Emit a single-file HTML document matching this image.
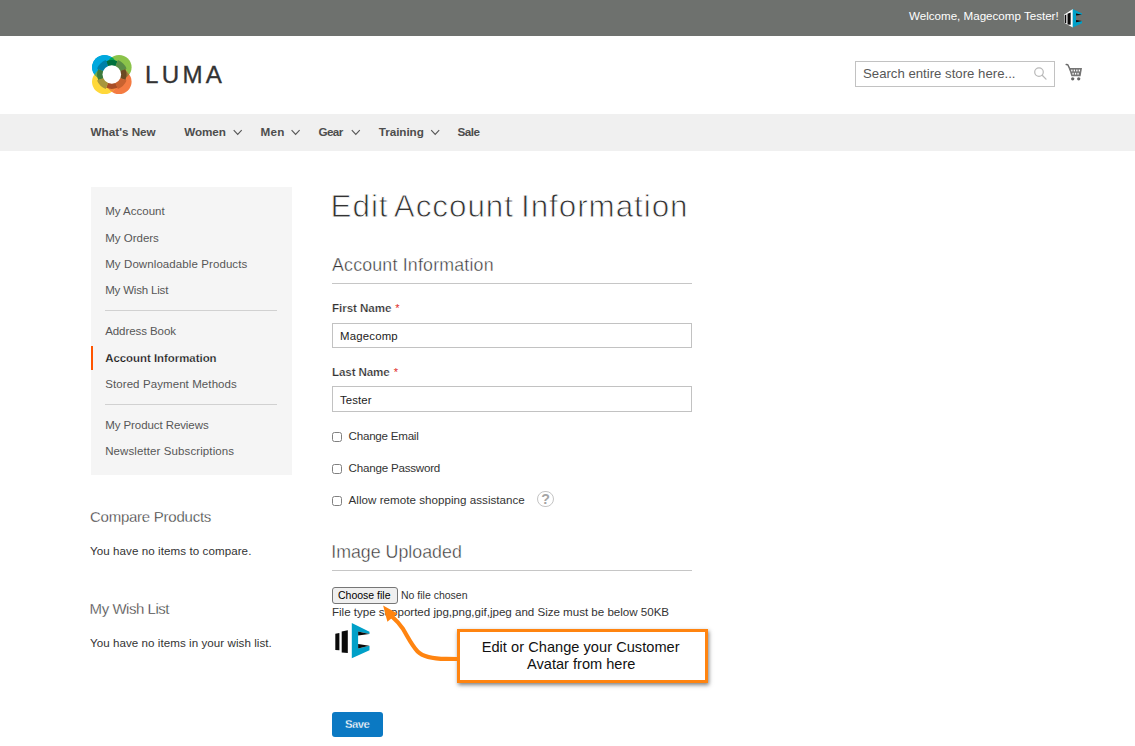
<!DOCTYPE html>
<html lang="en">
<head>
<meta charset="utf-8">
<title>Edit Account Information</title>
<style>
*{box-sizing:border-box;margin:0;padding:0}
html,body{width:1135px;height:746px;overflow:hidden;background:#fff}
body{font-family:"Liberation Sans",sans-serif;font-size:12px;color:#333;position:relative}
.abs{position:absolute;white-space:nowrap}
svg{position:absolute;overflow:visible}
.topbar{left:0;top:0;width:1135px;height:36px;background:#6e716e}
.welcome{top:8px;left:909px;color:#fff;font-size:11.6px;line-height:16px}
.navbar{left:0;top:114px;width:1135px;height:37px;background:#f0f0f0}
.nav{top:124px;font-weight:bold;font-size:11.7px;line-height:16px;color:#4d4d4d}
.search{left:855px;top:61px;width:200px;height:26px;border:1px solid #c2c2c2;background:#fff}
.search span{position:absolute;left:7px;top:4px;font-size:13.2px;line-height:16px;color:#575757}
.side{left:91.2px;top:187px;width:200.7px;height:287.7px;background:#f5f5f5}
.sl{left:105.2px;font-size:11.5px;line-height:14px;color:#575757}
.sl.cur{font-weight:bold;color:#111;font-size:11.4px;-webkit-text-stroke:0.25px #f5f5f5}
.hr{height:1px;background:#d1d1d1}
.h1{left:330.6px;top:185.2px;font-size:31.4px;line-height:44px;color:#333;-webkit-text-stroke:0.8px #fff;letter-spacing:0.95px;word-spacing:-2.6px}
.h2{font-size:17.8px;line-height:24px;color:#333;-webkit-text-stroke:0.4px #fff}
.h3{font-size:15px;line-height:20px;color:#333;-webkit-text-stroke:0.3px #fff;left:90px}
.lbl{left:332px;font-weight:bold;font-size:11.6px;line-height:14px;color:#333;-webkit-text-stroke:0.2px #fff}
.lbl i{font-style:normal;font-weight:normal;-webkit-text-stroke:0;color:#e02b27;margin-left:4px;font-size:11px}
.inp{left:332px;width:360px;height:25px;border:1px solid #c2c2c2;background:#fff;font-size:11.4px;line-height:25px;padding-left:7px;color:#222}
.cb{left:332px;width:10px;height:10px;border:1px solid #808080;border-radius:2.5px;background:#fff}
.cbl{left:348.6px;font-size:11.6px;line-height:14px;color:#333}
.small{font-size:11.6px;line-height:14px;color:#333}
</style>
</head>
<body>
<div class="abs topbar"></div>
<div class="abs welcome" id="welcome">Welcome, Magecomp Tester!</div>

<div class="abs" id="luma" style="left:144.8px;top:60.5px;font-size:23px;line-height:28px;color:#333;letter-spacing:3.1px;transform:scaleX(1.05);transform-origin:0 0;-webkit-text-stroke:0.3px #333">LUMA</div>

<div class="abs search"><span id="search">Search entire store here...</span></div>

<div class="abs navbar"></div>
<div class="abs nav" id="n1" style="left:90.6px">What's New</div>
<div class="abs nav" id="n2" style="left:184.2px;letter-spacing:-0.1px">Women</div>
<div class="abs nav" id="n3" style="left:260.6px;letter-spacing:0.2px">Men</div>
<div class="abs nav" id="n4" style="left:318.4px;letter-spacing:-0.6px">Gear</div>
<div class="abs nav" id="n5" style="left:378.8px;letter-spacing:-0.06px">Training</div>
<div class="abs nav" id="n6" style="left:457.6px;letter-spacing:-0.53px">Sale</div>

<div class="abs side"></div>
<div class="abs sl" id="s1" style="top:204px">My Account</div>
<div class="abs sl" id="s2" style="top:231px">My Orders</div>
<div class="abs sl" id="s3" style="top:257px;letter-spacing:0.09px">My Downloadable Products</div>
<div class="abs sl" id="s4" style="top:283px;letter-spacing:-0.18px">My Wish List</div>
<div class="abs hr" style="left:105px;top:310px;width:172px"></div>
<div class="abs sl" id="s5" style="top:324px;letter-spacing:-0.07px">Address Book</div>
<div class="abs" style="left:91px;top:346px;width:2px;height:24px;background:#ff5501"></div>
<div class="abs sl cur" id="s6" style="top:351px">Account Information</div>
<div class="abs sl" id="s7" style="top:377px;letter-spacing:0.09px">Stored Payment Methods</div>
<div class="abs hr" style="left:105px;top:404px;width:172px"></div>
<div class="abs sl" id="s8" style="top:418px;letter-spacing:-0.08px">My Product Reviews</div>
<div class="abs sl" id="s9" style="top:444px;letter-spacing:0.1px">Newsletter Subscriptions</div>

<div class="abs h3" id="cmp" style="top:507px;letter-spacing:-0.25px">Compare Products</div>
<div class="abs small" id="noitems" style="left:90px;top:544px;letter-spacing:0.07px">You have no items to compare.</div>
<div class="abs h3" id="mwl" style="left:89.6px;top:599px;letter-spacing:-0.46px">My Wish List</div>
<div class="abs small" id="nowl" style="left:90px;top:636px;letter-spacing:0.05px">You have no items in your wish list.</div>

<div class="abs h1" id="h1">Edit Account Information</div>
<div class="abs h2" id="acci" style="left:332px;top:253px;letter-spacing:0.19px">Account Information</div>
<div class="abs hr" style="left:332px;top:283px;width:360px;background:#c6c6c6"></div>
<div class="abs lbl" id="first" style="top:301px;letter-spacing:-0.06px">First Name<i>*</i></div>
<div class="abs inp" id="in1" style="top:323px;letter-spacing:0.19px">Magecomp</div>
<div class="abs lbl" id="last" style="top:365px;letter-spacing:-0.11px">Last Name<i>*</i></div>
<div class="abs inp" id="in2" style="top:386px;height:26px;line-height:26px;letter-spacing:0.12px">Tester</div>

<div class="abs cb" style="top:432px"></div>
<div class="abs cbl" id="c1" style="top:429px;letter-spacing:-0.24px">Change Email</div>
<div class="abs cb" style="top:464px"></div>
<div class="abs cbl" id="c2" style="top:461px;letter-spacing:-0.22px">Change Password</div>
<div class="abs cb" style="top:496px"></div>
<div class="abs cbl" id="c3" style="top:493px;letter-spacing:0.03px">Allow remote shopping assistance</div>
<div class="abs" style="left:537px;top:491px;width:17px;height:16px;border:1px solid #c4c4c4;border-radius:8px;color:#a5a5a5;font-weight:bold;font-size:14.2px;line-height:14px;text-align:center">?</div>

<div class="abs h2" id="imgup" style="left:331.2px;top:539.5px;letter-spacing:0.01px">Image Uploaded</div>
<div class="abs hr" style="left:332px;top:570px;width:360px;background:#c6c6c6"></div>

<div class="abs" style="left:332px;top:587px;width:66px;height:17px;border:1px solid #767676;border-radius:3px;background:#efefef"></div>
<div class="abs" id="choose" style="left:338px;top:588px;font-size:10.5px;line-height:15px;color:#000">Choose file</div>
<div class="abs" id="nofile" style="left:401px;top:588px;font-size:10.5px;line-height:15px;color:#333">No file chosen</div>
<div class="abs small" id="filetype" style="left:332px;top:605px;letter-spacing:-0.02px">File type supported jpg,png,gif,jpeg and Size must be below 50KB</div>

<div class="abs" id="callout" style="left:457px;top:629px;width:251px;height:54px;border:3px solid #ff8410;background:#fff;box-shadow:1px 2px 4px rgba(0,0,0,.5)"></div>
<div class="abs" id="co1" style="left:481.7px;top:639px;letter-spacing:0.03px;font-size:14.6px;line-height:17px;color:#111">Edit or Change your Customer</div>
<div class="abs" id="co2" style="left:527px;top:656px;font-size:14.6px;line-height:17px;color:#111">Avatar from here</div>

<div class="abs" style="left:332px;top:712px;width:51px;height:25px;border-radius:3px;background:#0b79c3"></div>
<div class="abs" id="save" style="left:344.9px;top:716px;color:#fff;font-weight:bold;font-size:11.3px;letter-spacing:-0.5px;-webkit-text-stroke:0.3px #0b79c3;line-height:16px">Save</div>

<!-- Luma logo -->
<svg id="logo" style="left:91.7px;top:54.7px" width="39.6" height="39" viewBox="-19.8 -19.8 39.6 39.6" preserveAspectRatio="none">
  <defs>
    <clipPath id="cpB"><circle cx="-7.24" cy="-7.24" r="12.56"/></clipPath>
    <clipPath id="cpG"><circle cx="7.24" cy="-7.24" r="12.56"/></clipPath>
    <clipPath id="cpO"><circle cx="7.24" cy="7.24" r="12.56"/></clipPath>
    <clipPath id="cpY"><circle cx="-7.24" cy="7.24" r="12.56"/></clipPath>
  </defs>
  <circle cx="-7.24" cy="-7.24" r="12.56" fill="#00a8de"/>
  <circle cx="7.24" cy="-7.24" r="12.56" fill="#8bc34a"/>
  <circle cx="7.24" cy="7.24" r="12.56" fill="#f47b42"/>
  <circle cx="-7.24" cy="7.24" r="12.56" fill="#ffd83a"/>
  <circle cx="-7.24" cy="-7.24" r="12.56" fill="#00a8de" clip-path="url(#cpB)"/>
  <g clip-path="url(#cpB)"><circle cx="7.24" cy="-7.24" r="12.56" fill="#00a651"/></g>
  <g clip-path="url(#cpG)"><circle cx="7.24" cy="7.24" r="12.56" fill="#9a7a3a"/></g>
  <g clip-path="url(#cpO)"><circle cx="-7.24" cy="7.24" r="12.56" fill="#f08a3c"/></g>
  <g clip-path="url(#cpY)"><circle cx="-7.24" cy="-7.24" r="12.56" fill="#6aaa4f"/></g>
  <g id="ring"><path d="M-5.63,-13.58 A14.7,14.7 0 0 1 5.63,-13.58 L3.37,-8.13 A8.8,8.8 0 0 0 -3.37,-8.13 Z" fill="#00703c"/><path d="M6.12,-14.78 A16.0,16.0 0 0 1 14.78,-6.12 L8.13,-3.37 A8.8,8.8 0 0 0 3.37,-8.13 Z" fill="#5a8c46"/><path d="M13.58,-5.63 A14.7,14.7 0 0 1 13.58,5.63 L8.13,3.37 A8.8,8.8 0 0 0 8.13,-3.37 Z" fill="#6b4a22"/><path d="M14.78,6.12 A16.0,16.0 0 0 1 6.12,14.78 L3.37,8.13 A8.8,8.8 0 0 0 8.13,3.37 Z" fill="#c8622f"/><path d="M5.63,13.58 A14.7,14.7 0 0 1 -5.63,13.58 L-3.37,8.13 A8.8,8.8 0 0 0 3.37,8.13 Z" fill="#a84e27"/><path d="M-6.12,14.78 A16.0,16.0 0 0 1 -14.78,6.12 L-8.13,3.37 A8.8,8.8 0 0 0 -3.37,8.13 Z" fill="#a8963c"/><path d="M-13.58,5.63 A14.7,14.7 0 0 1 -13.58,-5.63 L-8.13,-3.37 A8.8,8.8 0 0 0 -8.13,3.37 Z" fill="#3d7a3c"/><path d="M-14.78,-6.12 A16.0,16.0 0 0 1 -6.12,-14.78 L-3.37,-8.13 A8.8,8.8 0 0 0 -8.13,-3.37 Z" fill="#0080a8"/></g>
  <circle cx="0" cy="0" r="9.3" fill="#fff"/>
</svg>

<!-- top bar avatar -->
<svg style="left:1063.9px;top:8.8px" width="18" height="18.4" viewBox="334.7 622.7 34.5 35.2">
  <polygon points="334.7,633.5 351.7,622.7 351.7,657.9 334.7,649.2" fill="#fff"/>
  <polygon points="335.9,634.6 339.1,633.2 339.1,650.2 335.9,649.6" fill="#0a0a0a"/>
  <polygon points="341.4,631.6 347.5,629.6 347.5,653 341.4,652.2" fill="#0a0a0a"/>
  <polygon points="351.5,622.7 369.2,631.5 369.2,633.6 357.8,631.1 357.8,648.2 369.2,645.5 369.2,649.9 351.5,657.9" fill="#00a0c8"/>
  <polygon points="357.8,631.1 369,633.6 357.8,635.1" fill="#0a0a0a"/>
  <polygon points="357.8,643.8 369,645.5 357.8,648.2" fill="#0a0a0a"/>
</svg>

<!-- page avatar -->
<svg style="left:334.7px;top:622.7px" width="34.5" height="35.2" viewBox="334.7 622.7 34.5 35.2">
  <polygon points="335,633.4 339.1,632.6 339.1,649.9 335,649.6" fill="#0a0a0a"/>
  <polygon points="341.4,631.1 347.5,629.9 347.5,652.7 341.4,652.2" fill="#0a0a0a"/>
  <polygon points="351.5,622.7 369.2,631.5 369.2,633.6 357.8,631.1 357.8,648.2 369.2,645.5 369.2,649.9 351.5,657.9" fill="#00a0c8"/>
  <polygon points="357.8,631.1 369,633.6 357.8,635.1" fill="#0a0a0a"/>
  <polygon points="357.8,643.8 369,645.5 357.8,648.2" fill="#0a0a0a"/>
</svg>

<!-- search magnifier -->
<svg style="left:1030px;top:64px" width="20" height="20" viewBox="1030 64 20 20">
  <circle cx="1039" cy="72.1" r="4.3" fill="none" stroke="#b9b9b9" stroke-width="1.2"/>
  <line x1="1042.2" y1="75.3" x2="1046" y2="79.1" stroke="#b9b9b9" stroke-width="1.3" stroke-linecap="round"/>
</svg>

<!-- cart -->
<svg style="left:1064px;top:62px" width="20" height="20" viewBox="1064 62 20 20">
  <path d="M1066.2,64.6 L1067.8,64.8 L1070.3,70" fill="none" stroke="#6b6b6b" stroke-width="1.5" stroke-linecap="round" stroke-linejoin="round"/>
  <polygon points="1068.8,68 1082,68 1080.6,76.3 1071.4,76.3" fill="#757575"/>
  <g fill="#fff">
    <rect x="1071.2" y="69.6" width="1.3" height="1.8"/><rect x="1073.7" y="69.6" width="1.3" height="1.8"/><rect x="1076.2" y="69.6" width="1.3" height="1.8"/><rect x="1078.7" y="69.6" width="1.3" height="1.8"/>
    <rect x="1072.4" y="72.8" width="1.3" height="1.8"/><rect x="1074.9" y="72.8" width="1.3" height="1.8"/><rect x="1077.4" y="72.8" width="1.3" height="1.8"/>
  </g>
  <circle cx="1072.7" cy="78.8" r="1.65" fill="#666"/>
  <circle cx="1078.7" cy="78.8" r="1.65" fill="#666"/>
</svg>

<!-- nav chevrons -->
<svg style="left:0;top:114px" width="600" height="37" viewBox="0 114 600 37">
  <g fill="none" stroke="#575757" stroke-width="1.15">
    <polyline points="233.7,130.2 237.7,134.4 241.7,130.2"/>
    <polyline points="291.6,130.2 295.6,134.4 299.6,130.2"/>
    <polyline points="351.8,130.2 355.8,134.4 359.8,130.2"/>
    <polyline points="431.2,130.2 435.2,134.4 439.2,130.2"/>
  </g>
</svg>

<!-- callout arrow -->
<svg style="left:370px;top:595px" width="100" height="75" viewBox="370 595 100 75">
  <path d="M458,659 L446,658.9 C433,658.7 423.5,657.3 417.6,651.4 C412,645.6 408.3,637.8 403.2,629.2 C399.5,623.5 396,620 391.5,616" fill="none" stroke="#ff8410" stroke-width="4.2" stroke-linecap="butt"/>
  <polygon points="383.1,605.6 397.4,613.4 387.4,621.8" fill="#ff8410"/>
</svg>
</body>
</html>
